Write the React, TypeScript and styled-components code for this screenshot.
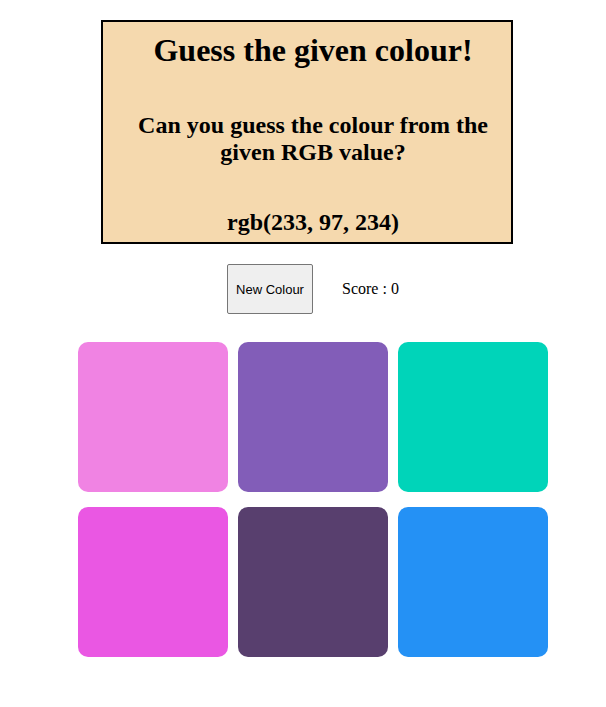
import React from "react";
import styled, { createGlobalStyle } from "styled-components";

const Global = createGlobalStyle`
  html, body { margin: 0; padding: 0; background: #ffffff; }
  body { font-family: "Liberation Serif", "Times New Roman", serif; color: #000; }
`;

const Page = styled.div`
  width: 606px;
  display: flex;
  flex-direction: column;
  padding-top: 20px;
`;

const Card = styled.div`
  box-sizing: border-box;
  width: 412px;
  margin-left: 101px;
  border: 2px solid #000;
  background: #f5d9ae;
  padding: 9.5px 4px 6px 16px;
  display: flex;
  flex-direction: column;
  align-items: center;
  text-align: center;
`;

const Title = styled.h1`
  margin: 0;
  font-size: 32px;
  font-weight: bold;
  line-height: normal;
`;

const Subtitle = styled.h2<{ $gap: number }>`
  margin: ${(p) => p.$gap}px 0 0;
  font-size: 24px;
  font-weight: bold;
  line-height: 27px;
`;

const Controls = styled.div`
  display: flex;
  align-items: center;
  margin-top: 20px;
  margin-left: 227px;
  gap: 29px;
`;

const Button = styled.button`
  box-sizing: border-box;
  width: 86px;
  height: 50px;
  padding: 0;
  background: #efefef;
  border: 1px solid #767676;
  border-radius: 2px;
  font-family: "Liberation Sans", Arial, sans-serif;
  font-size: 13px;
  color: #000;
`;

const Score = styled.span`
  font-size: 16px;
`;

const Grid = styled.div`
  display: grid;
  grid-template-columns: repeat(3, 150px);
  column-gap: 10px;
  row-gap: 15px;
  margin-top: 28px;
  margin-left: 78px;
`;

const Tile = styled.div<{ $c: string }>`
  width: 150px;
  height: 150px;
  border-radius: 10px;
  background: ${(p) => p.$c};
`;

const colours = ["#f083e3", "#825db8", "#00d4b9", "#ea57e3", "#583f6e", "#2491f5"];

export default function App() {
  return (
    <Page>
      <Global />
      <Card>
        <Title>Guess the given colour!</Title>
        <Subtitle $gap={43.5}>Can you guess the colour from the given RGB value?</Subtitle>
        <Subtitle $gap={43}>rgb(233, 97, 234)</Subtitle>
      </Card>
      <Controls>
        <Button>New Colour</Button>
        <Score>Score : 0</Score>
      </Controls>
      <Grid>
        {colours.map((c) => (
          <Tile key={c} $c={c} />
        ))}
      </Grid>
    </Page>
  );
}
